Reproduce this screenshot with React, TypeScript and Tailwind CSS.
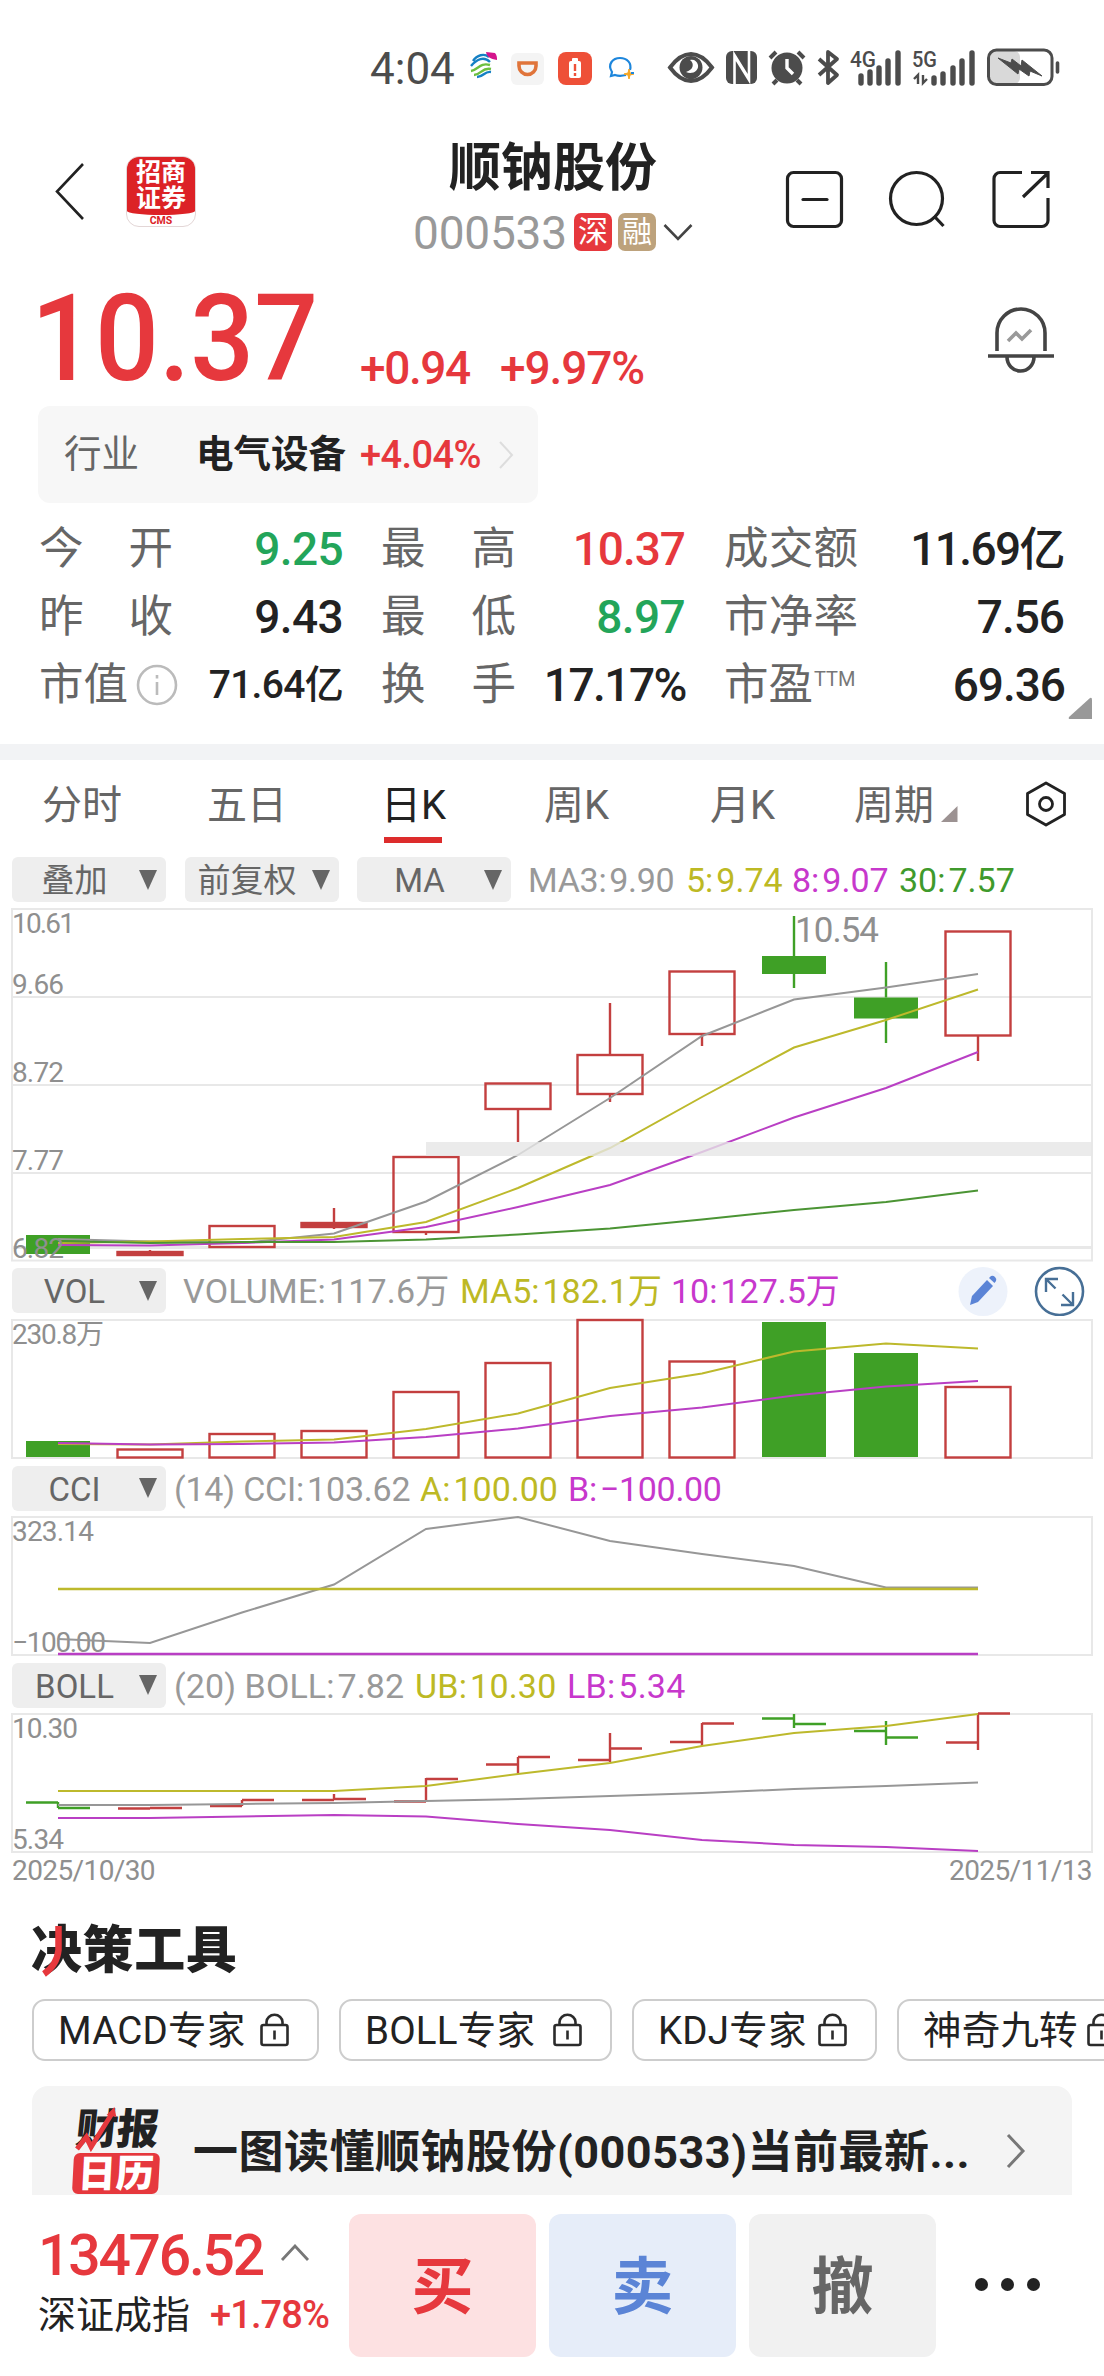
import type { ReactNode } from "react";

const CX = [58, 150, 242, 334, 426, 518, 610, 702, 794, 886, 978];
const RED = "#c33f3f";
const GREEN = "#3fa026";
const GRAY = "#979797";
const YELLOW = "#bdb92c";
const MAGENTA = "#b93fc4";
const FRAME = "#e8e8e8";

const line = (ys: number[]) => ys.map((y, i) => `${CX[i]},${y}`).join(" ");

function Line({ ys, color }: { ys: number[]; color: string }) {
  return <polyline points={line(ys)} fill="none" stroke={color} strokeWidth="2" />;
}

function AxisLabel({ x, y, w, children }: { x: number; y: number; w: number; children: string }) {
  return (
    <text x={x} y={y} textLength={w} className="fill-[#8f8f8f] text-[28px]">
      {children}
    </text>
  );
}

type Candle = { top: number; bottom: number; high: number; low: number; up: boolean; solid?: boolean };

const candles: Candle[] = [
  { top: 1235, bottom: 1254, high: 1235, low: 1254, up: false },
  { top: 1252, bottom: 1255, high: 1250, low: 1255, up: true, solid: true },
  { top: 1226, bottom: 1247, high: 1226, low: 1247, up: true },
  { top: 1223, bottom: 1227, high: 1208, low: 1229, up: true, solid: true },
  { top: 1157, bottom: 1232, high: 1157, low: 1235, up: true },
  { top: 1083.5, bottom: 1109, high: 1083, low: 1142, up: true },
  { top: 1055, bottom: 1094, high: 1003, low: 1102, up: true },
  { top: 971.5, bottom: 1034, high: 971, low: 1046, up: true },
  { top: 956, bottom: 974, high: 916, low: 988, up: false },
  { top: 997.5, bottom: 1018.5, high: 962, low: 1043, up: false },
  { top: 931.5, bottom: 1035.5, high: 931, low: 1061, up: true },
];

const volumes = [1441, 1449.5, 1434, 1431, 1392, 1363, 1320, 1361.5, 1322, 1353, 1387];

const ohlc = [
  { o: 1802.5, c: 1808, h: 1802, l: 1808, up: false },
  { o: 1808.5, c: 1808, h: 1808, l: 1808, up: true },
  { o: 1806, c: 1800, h: 1800, l: 1806, up: true },
  { o: 1800, c: 1799, h: 1794, l: 1800, up: true },
  { o: 1801.5, c: 1779, h: 1778, l: 1802, up: true },
  { o: 1764.5, c: 1757, h: 1757, l: 1773.5, up: true },
  { o: 1760, c: 1748.5, h: 1733, l: 1762, up: true },
  { o: 1742, c: 1723.5, h: 1723, l: 1746, up: true },
  { o: 1718.5, c: 1724, h: 1714, l: 1728, up: false },
  { o: 1731, c: 1737.5, h: 1721, l: 1745, up: false },
  { o: 1742.5, c: 1713.5, h: 1713, l: 1750, up: true },
];

function CandleChart() {
  return (
    <svg className="block h-[356px] w-full overflow-visible" viewBox="0 906 1104 356">
      <rect x="12" y="909" width="1080" height="351.5" fill="none" stroke={FRAME} strokeWidth="2" />
      {[997, 1085, 1173].map((y) => (
        <line key={y} x1="12" x2="1092" y1={y} y2={y} stroke={FRAME} strokeWidth="2" />
      ))}
      <line x1="12" x2="1092" y1="1247.5" y2="1247.5" stroke={FRAME} strokeWidth="3" />
      {candles.map((c, i) => {
        const color = c.up ? RED : GREEN;
        return (
          <g key={i} stroke={color} strokeWidth="2.4">
            <line x1={CX[i]} x2={CX[i]} y1={c.high} y2={c.top} />
            <line x1={CX[i]} x2={CX[i]} y1={c.bottom} y2={c.low} />
            {c.up ? (
              <rect x={CX[i] - 32.5} y={c.top} width="65" height={c.bottom - c.top} fill={c.solid ? RED : "none"} />
            ) : (
              <rect x={CX[i] - 32} y={c.top} width="64" height={c.bottom - c.top} fill={GREEN} stroke="none" />
            )}
          </g>
        );
      })}
      <Line ys={[1239, 1241.5, 1243, 1233.5, 1201.5, 1155, 1098, 1036, 999.5, 987.5, 974]} color={GRAY} />
      <Line ys={[1243, 1241.5, 1239, 1237, 1222, 1188, 1148, 1097, 1047.5, 1020, 989.5]} color={YELLOW} />
      <Line ys={[1245, 1245.5, 1243, 1239.5, 1227, 1207, 1185, 1152, 1117.5, 1088, 1052]} color={MAGENTA} />
      <Line ys={[1241, 1243, 1242, 1242, 1239.5, 1234.5, 1228.5, 1219.5, 1210, 1202, 1190.5]} color="#4b9434" />
      <rect x="426" y="1142" width="666" height="14" fill="#e6e6e6" fillOpacity="0.8" />
      <AxisLabel x={12} y={933} w={63}>10.61</AxisLabel>
      <AxisLabel x={12} y={994} w={52}>9.66</AxisLabel>
      <AxisLabel x={12} y={1082} w={52}>8.72</AxisLabel>
      <AxisLabel x={12} y={1170} w={52}>7.77</AxisLabel>
      <AxisLabel x={12} y={1258} w={52}>6.82</AxisLabel>
      <text x="795" y="942" textLength="84" className="fill-[#8f8f8f] text-[35px]">10.54</text>
    </svg>
  );
}

function VolumeChart() {
  return (
    <svg className="block h-[145px] w-full" viewBox="0 1317 1104 145">
      <rect x="12" y="1320" width="1080" height="138" fill="none" stroke={FRAME} strokeWidth="2" />
      <AxisLabel x={12} y={1344} w={92}>230.8万</AxisLabel>
      {volumes.map((y, i) =>
        [0, 8, 9].includes(i) ? (
          <rect key={i} x={CX[i] - 32} y={y} width="64" height={1457 - y} fill={GREEN} />
        ) : (
          <rect key={i} x={CX[i] - 32.5} y={y} width="65" height={1457.5 - y} fill="none" stroke={RED} strokeWidth="2.4" />
        ),
      )}
      <Line ys={[1444, 1444.5, 1441.5, 1439.5, 1429, 1413.5, 1388, 1373.5, 1351.5, 1343.5, 1348.5]} color={YELLOW} />
      <Line ys={[1443, 1444.5, 1444, 1442.5, 1437, 1428.5, 1416, 1407.5, 1395.5, 1386.5, 1381]} color={MAGENTA} />
    </svg>
  );
}

function CciChart() {
  return (
    <svg className="block h-[145px] w-full" viewBox="0 1514 1104 145">
      <rect x="12" y="1517" width="1080" height="138" fill="none" stroke={FRAME} strokeWidth="2" />
      <AxisLabel x={12} y={1541} w={82}>323.14</AxisLabel>
      <AxisLabel x={12} y={1652} w={94}>−100.00</AxisLabel>
      <Line ys={[1639, 1643, 1612.5, 1584.5, 1529, 1517, 1541, 1554, 1566, 1587.5, 1587.5]} color={GRAY} />
      <line x1="58" x2="978" y1="1589" y2="1589" stroke={YELLOW} strokeWidth="2.4" />
      <line x1="58" x2="978" y1="1654" y2="1654" stroke={MAGENTA} strokeWidth="2.4" />
    </svg>
  );
}

function BollChart() {
  return (
    <svg className="block h-[145px] w-full" viewBox="0 1711 1104 145">
      <rect x="12" y="1714" width="1080" height="138" fill="none" stroke={FRAME} strokeWidth="2" />
      <AxisLabel x={12} y={1738} w={66}>10.30</AxisLabel>
      <AxisLabel x={12} y={1849} w={52}>5.34</AxisLabel>
      {ohlc.map((b, i) => (
        <path
          key={i}
          d={`M${CX[i] - 32} ${b.o}H${CX[i]}M${CX[i]} ${b.h}V${b.l}M${CX[i]} ${b.c}h32`}
          stroke={b.up ? RED : GREEN}
          strokeWidth="2.4"
          fill="none"
        />
      ))}
      <Line ys={[1805, 1805, 1804, 1803, 1801, 1799, 1796, 1793, 1789, 1786, 1782.5]} color={GRAY} />
      <Line ys={[1791, 1791, 1791, 1791, 1786, 1774, 1763, 1746, 1733, 1726, 1714]} color={YELLOW} />
      <Line ys={[1818, 1818, 1816.5, 1815, 1816.5, 1824, 1830, 1840, 1845, 1847, 1851]} color={MAGENTA} />
    </svg>
  );
}

function Pill({ children }: { children: ReactNode }) {
  return (
    <div className="flex h-[45px] w-[154px] shrink-0 items-center rounded-md bg-[#eeeeee] pr-[9px] text-[#666]">
      <span className="flex-1 pt-[2px] pr-[2px] text-center text-[33px] leading-none whitespace-nowrap">{children}</span>
      <svg className="h-[20px] w-[18px] shrink-0" viewBox="0 0 18 20">
        <path d="M0 0H18L9 20Z" fill="#666" />
      </svg>
    </div>
  );
}

const tone = { gray: "text-[#999]", yellow: "text-[#bdb924]", magenta: "text-[#c738cc]", green: "text-[#3f9a2c]" };

function Figures({ items }: { items: [keyof typeof tone, string, string][] }) {
  return (
    <>
      {items.map(([t, width, text]) => {
        const [name, value] = text.split(":");
        return (
          <span key={text} className={`shrink-0 pt-px text-[34px] leading-none whitespace-nowrap ${width} ${tone[t]}`}>
            {name}:<span className="ml-[3px]">{value}</span>
          </span>
        );
      })}
    </>
  );
}

function Label({ text, className }: { text: string; className: string }) {
  return (
    <span className={`flex items-center justify-between text-[44.5px] text-[#666] ${className}`}>
      {text.split("").map((ch, i) => (
        <span key={i}>{ch}</span>
      ))}
    </span>
  );
}

function Lock() {
  return (
    <svg className="h-[34px] w-[29px] shrink-0" viewBox="0 0 29 34" fill="none" stroke="#2b2b2b" strokeWidth="2.6">
      <rect x="1.5" y="12" width="26" height="20" rx="2" />
      <path d="M6.5 12V9a8 7.2 0 0 1 16 0v3" />
      <path d="M14.5 17.500v9" />
    </svg>
  );
}

function Chip({ children, width }: { children: string; width: string }) {
  return (
    <div className={`flex h-[62px] shrink-0 items-center justify-between rounded-[13px] border-2 border-[#cdcdcd] pr-[28px] pl-[24px] ${width}`}>
      <span className="pt-[2px] text-[38.5px] leading-none tracking-[0.2px] whitespace-nowrap text-[#222]">{children}</span>
      <Lock />
    </div>
  );
}

function StatusBar() {
  return (
    <div className="flex h-[136px] items-start text-[#4c4c4c]">
      <span className="mt-[47px] ml-[370px] w-[99px] text-[44px] leading-none">4:04</span>
      <svg className="mt-[46px] h-[44px] w-[635px]" viewBox="469 46 635 44" fill="none">
        <g strokeWidth="2.4">
          <path d="M473 61c4-6 11-8 16-4M471 66c6-7 13-10 19-4" stroke="#1580c4" />
          <path d="M471 71c7-1 9-9 19-6M474 75c7 0 8-8 17-6" stroke="#6cbf3f" />
          <path d="M477 77c7 0 7-6 14-5" stroke="#1580c4" />
          <path d="M486 52l9 1c2 2 2 5 2 7-7-1-10-3-11-8z" fill="#d4148c" />
        </g>
        <rect x="511" y="53" width="33" height="32" rx="6" fill="#f4f4f4" />
        <path d="M519 63h17v3a8.500 8.500 0 0 1-17 0z" stroke="#e0743a" strokeWidth="3.600" />
        <rect x="558" y="52" width="34" height="33" rx="8" fill="#ee5038" />
        <rect x="569" y="61" width="12" height="17" rx="2" fill="#fff" />
        <rect x="572" y="58" width="6" height="4" rx="1" fill="#fff" />
        <path d="M575 64v7M575 73v3" stroke="#ee5038" strokeWidth="2.400" />
        <path d="M626 75c-4 1-8 1-11 0l-4 1 1-4c-5-8 1-14 8-14s12 5 10 12" stroke="#1d86dc" strokeWidth="2.200" />
        <path d="M629 69l1 4 4 1-4 1-1 4-1-4-4-1 4-1z" fill="#f5a623" stroke="#f5a623" />
        <path d="M631 73h3" stroke="#1d86dc" strokeWidth="2" />

        <path d="M670 67.500C677 58 684 54 691 54s14 4 21 13.500C705 77 698 81 691 81s-14-4-21-13.500z" stroke="#4c4c4c" strokeWidth="4" />
        <circle cx="691" cy="67.500" r="11.500" fill="#4c4c4c" />
        <path d="M690 60c5 4 3 10-4 12 6 3 13-1 12-7-1-4-4-6-8-5z" fill="#fff" />

        <rect x="726" y="51" width="31" height="33" rx="6" fill="#4c4c4c" />
        <path d="M734.500 84V55l13.500 22M749 51v29l-13.500-22" stroke="#fff" strokeWidth="2.600" />

        <circle cx="787" cy="68" r="15.500" fill="#4c4c4c" />
        <path d="M770 58l6-6M804 58l-6-6M777 80l-4 4M797 80l4 4" stroke="#4c4c4c" strokeWidth="4" />
        <path d="M787 59v9l6 6" stroke="#fff" strokeWidth="3.400" />

        <path d="M819 59l18 16-9 8V52l9 7-18 16" stroke="#4c4c4c" strokeWidth="3.800" strokeLinejoin="round" />

        <text x="850" y="67" textLength="26" lengthAdjust="spacingAndGlyphs" className="fill-[#4c4c4c] text-[22px] font-medium">4G</text>
        <path d="M861 76v7M870 72v11M879 68v15M888 61v22M898 53v30" stroke="#4c4c4c" strokeWidth="5.400" strokeLinecap="round" />
        <text x="912" y="67" textLength="25" lengthAdjust="spacingAndGlyphs" className="fill-[#4c4c4c] text-[22px] font-medium">5G</text>
        <path d="M934 78v5M943 74v9M953 68v15M962 61v22M972 53v30" stroke="#4c4c4c" strokeWidth="5.400" strokeLinecap="round" />
        <path d="M918 84v-9l-4 4M923 75v8l4-4" stroke="#4c4c4c" strokeWidth="2.400" />

        <rect x="990" y="51" width="30" height="33" rx="6" fill="#d9d9d9" />
        <rect x="988.500" y="50" width="63.500" height="34.500" rx="8" stroke="#4c4c4c" strokeWidth="3" />
        <path d="M1057.500 63v9" stroke="#4c4c4c" strokeWidth="3.600" strokeLinecap="round" />
        <path d="M998 58l13 5 1-4 9 7 1-6 20 16-12-5-1 5-10-7-1 5z" fill="#4c4c4c" stroke="#4c4c4c" />
      </svg>
    </div>
  );
}

function Header() {
  return (
    <header className="flex h-[130px] items-start">
      <svg className="mt-[26px] ml-[54px] h-[60px] w-[32px]" viewBox="0 0 32 60" fill="none" stroke="#222" strokeWidth="2.600">
        <path d="M29 2L3 29.500L29 57" />
      </svg>
      <div className="mt-[20px] ml-[40px] flex h-[71px] w-[70px] flex-col overflow-hidden rounded-[13px] border border-[#e3d6d6] bg-white text-center">
        <div className="flex h-[58px] shrink-0 flex-col justify-center rounded-b-[50%_4px] bg-[#dc2226] text-[25px] leading-[26px] font-bold text-white">
          <span>招商</span>
          <span>证券</span>
        </div>
        <span className="text-[10.500px] leading-[11px] font-bold text-[#dc2226]">CMS</span>
      </div>
      <div className="ml-[197px] flex w-[320px] flex-col items-center">
        <h1 className="mt-[3px] text-[52px] leading-[60px] font-bold text-[#222]">顺钠股份</h1>
        <div className="mt-[13px] flex h-[40px] items-center">
          <span className="w-[161px] pt-px text-[46px] leading-none tracking-[-0.200px] text-[#999]">000533</span>
          <span className="flex size-[38px] items-center justify-center rounded-[7px] bg-[#e6383d] text-[30px] leading-none text-white">深</span>
          <span className="ml-[6px] flex size-[38px] items-center justify-center rounded-[7px] bg-[#bda27c] text-[30px] leading-none text-white">融</span>
          <svg className="ml-[7px] h-[18px] w-[30px]" viewBox="0 0 30 18" fill="none" stroke="#444" strokeWidth="2.600">
            <path d="M1.500 2L15 16L28.500 2" />
          </svg>
        </div>
      </div>
      <svg className="mt-[34px] ml-[71px] h-[60px] w-[268px]" viewBox="784 170 268 60" fill="none" stroke="#222" strokeWidth="3.200">
        <rect x="787.500" y="172.500" width="54" height="54" rx="6" />
        <path d="M803 199.500h24" strokeLinecap="round" />
        <circle cx="916.500" cy="198.500" r="26" />
        <path d="M934 216l9.500 10" />
        <path d="M1022 172.500H1000a6 6 0 0 0-6 6V220.500a6 6 0 0 0 6 6h42a6 6 0 0 0 6-6V198" />
        <path d="M1023 197l25-24M1031 172.500h17V188" />
      </svg>
    </header>
  );
}

function Quote({ v, className }: { v: string; className: string }) {
  return <span className={`text-right leading-none font-medium whitespace-nowrap ${className}`}>{v}</span>;
}

export default function App() {
  return (
    <div className="flex h-[2376px] w-[1104px] flex-col overflow-hidden bg-white font-[Roboto,'Noto_Sans_CJK_SC',sans-serif] text-[#222]">
      <StatusBar />
      <Header />

      <section className="flex h-[140px] items-start pl-[31px] text-[#e6383d]">
        <span className="mt-[13px] w-[329px] origin-left scale-x-[0.93] text-[121px] leading-none font-medium">10.37</span>
        <span className="mt-[79px] w-[140px] text-[46px] leading-none font-medium tracking-[-1.400px]">+0.94</span>
        <span className="mt-[79px] text-[46px] leading-none font-medium tracking-[-1.100px]">+9.97%</span>
        <svg className="mt-[40px] mr-[48px] ml-auto h-[68px] w-[70px]" viewBox="986 306 70 68" fill="none" stroke="#444" strokeWidth="3.600">
          <path d="M997 351V333a24 24 0 0 1 48 0v18M988 356h66M1007 357a13.500 14 0 0 0 27 0" />
          <path d="M1008 341l8-8 6 6 9-9" stroke="#999" />
        </svg>
      </section>

      <section className="ml-[38px] flex h-[97px] w-[500px] items-center rounded-xl bg-[#f7f7f7] pl-[26px] leading-none">
        <span className="w-[132px] text-[37.500px] text-[#666]">行业</span>
        <span className="w-[164px] text-[37.500px] font-bold">电气设备</span>
        <span className="w-[138px] text-[38px] font-medium tracking-[-0.600px] text-[#e6383d]">+4.04%</span>
        <svg className="h-[28px] w-[16px]" viewBox="0 0 16 28" fill="none" stroke="#ddd" strokeWidth="2">
          <path d="M2 1L14 14L2 27" />
        </svg>
      </section>

      <section className="relative flex h-[241px] flex-col pt-[12px] leading-none">
        <div className="flex h-[68px] items-center pl-[39px]">
          <Label text="今开" className="w-[134px]" />
          <Quote v="9.25" className="w-[170px] text-[46px] tracking-[-0.600px] text-[#23a55a]" />
          <Label text="最高" className="ml-[38px] w-[135px]" />
          <Quote v="10.37" className="w-[169px] text-[46px] tracking-[-1px] text-[#e6383d]" />
          <Label text="成交额" className="ml-[39px] w-[134px]" />
          <Quote v="11.69亿" className="w-[206px] text-[46px] tracking-[-1.600px]" />
        </div>
        <div className="flex h-[68px] items-center pl-[39px]">
          <Label text="昨收" className="w-[134px]" />
          <Quote v="9.43" className="w-[170px] text-[46px] tracking-[-0.600px]" />
          <Label text="最低" className="ml-[38px] w-[135px]" />
          <Quote v="8.97" className="w-[169px] text-[46px] tracking-[-0.600px] text-[#23a55a]" />
          <Label text="市净率" className="ml-[39px] w-[134px]" />
          <Quote v="7.56" className="w-[206px] text-[46px] tracking-[-1px]" />
        </div>
        <div className="flex h-[68px] items-center pl-[39px]">
          <Label text="市值" className="w-[89px]" />
          <svg className="ml-[8px] size-[42px]" viewBox="0 0 42 42" fill="none" stroke="#bbb" strokeWidth="2.600">
            <circle cx="21" cy="21" r="19" />
            <path d="M21 18v13M21 11v3.500" />
          </svg>
          <Quote v="71.64亿" className="w-[165px] text-[39px] tracking-[-0.700px]" />
          <Label text="换手" className="ml-[38px] w-[135px]" />
          <Quote v="17.17%" className="-ml-[10px] w-[180px] text-[46px] tracking-[-1.500px]" />
          <Label text="市盈" className="ml-[38px] w-[89px]" />
          <span className="mb-[12px] ml-[1px] w-[45px] text-[20px] text-[#777]">TTM</span>
          <Quote v="69.36" className="w-[206px] text-[46px] tracking-[-1px]" />
        </div>
        <svg className="absolute top-[194px] left-[1068px] h-[22px] w-[24px]" viewBox="0 0 24 22">
          <path d="M22 1Q24 0 24 3V22H2Q0 22 1 20Z" fill="#999" />
        </svg>
      </section>

      <div className="h-[16px] shrink-0 bg-[#f2f3f5]" />

      <nav className="flex h-[97px] items-start pl-[42px] text-[40px] leading-none text-[#666]">
        <span className="mt-[26px] w-[165px]">分时</span>
        <span className="mt-[26px] w-[174px]">五日</span>
        <div className="mt-[26px] flex w-[163px] flex-col text-[#222]">
          日K
          <span className="mt-[11px] ml-[3px] h-[6px] w-[58px] bg-[#dd2c2c]" />
        </div>
        <span className="mt-[26px] w-[166px]">周K</span>
        <span className="mt-[26px] w-[144px]">月K</span>
        <span className="mt-[26px]">周期</span>
        <svg className="mt-[46px] ml-[7px] h-[16px] w-[17px]" viewBox="0 0 17 16">
          <path d="M16.500 0V16H0Z" fill="#9c9292" />
        </svg>
        <svg className="mt-[21px] ml-[67px] h-[46px] w-[42px]" viewBox="0 0 42 46" fill="none" stroke="#222" strokeWidth="2.800">
          <path d="M21 2L39.500 12.500V33.500L21 44L2.500 33.500V12.500Z" strokeLinejoin="round" />
          <circle cx="21" cy="23" r="6.500" />
        </svg>
      </nav>

      <div className="flex h-[49px] items-start pl-[12px]">
        <div className="flex h-[45px] items-center">
          <div className="flex w-[516px] gap-[18.500px]">
            <Pill>叠加</Pill>
            <Pill>前复权</Pill>
            <Pill>MA</Pill>
          </div>
          <Figures
            items={[
              ["gray", "w-[158px] tracking-[-0.300px]", "MA3:9.90"],
              ["yellow", "w-[106px]", "5:9.74"],
              ["magenta", "w-[107px]", "8:9.07"],
              ["green", "w-[122px]", "30:7.57"],
            ]}
          />
        </div>
      </div>
      <CandleChart />

      <div className="flex h-[55px] items-center pt-[2px] pl-[12px]">
        <Pill>VOL</Pill>
        <div className="ml-[17px] flex">
          <Figures
            items={[
              ["gray", "w-[277px] tracking-[0.200px]", "VOLUME:117.6万"],
              ["yellow", "w-[211px]", "MA5:182.1万"],
              ["magenta", "w-[170px]", "10:127.5万"],
            ]}
          />
        </div>
        <svg className="mr-[18px] ml-auto h-[50px] w-[128px] shrink-0" viewBox="959 1265 128 50" fill="none">
          <circle cx="984" cy="1290.500" r="24.500" fill="#edf2fb" />
          <path d="M971 1304l2-9 15-16 6 6-15 16z" fill="#5b84d6" />
          <path d="M990 1277l2-2q2-1 4 1t1 4l-1.500 2z" fill="#5b84d6" />
          <circle cx="1060.500" cy="1290.500" r="23.500" stroke="#476f96" strokeWidth="2.600" />
          <path d="M1047 1291v-13h12M1047.500 1278.500l9 9M1074 1291v13h-12M1073.500 1303.500l-10-10" stroke="#476f96" strokeWidth="2.400" />
        </svg>
      </div>
      <VolumeChart />

      <div className="flex h-[52px] items-center pl-[12px]">
        <Pill>CCI</Pill>
        <div className="ml-[8px] flex">
          <Figures
            items={[
              ["gray", "w-[246px] tracking-[-0.200px]", "(14) CCI:103.62"],
              ["yellow", "w-[148px]", "A:100.00"],
              ["magenta", "w-[170px] tracking-[-0.300px]", "B:−100.00"],
            ]}
          />
        </div>
      </div>
      <CciChart />

      <div className="flex h-[52px] items-center pl-[12px]">
        <Pill>BOLL</Pill>
        <div className="ml-[8px] flex">
          <Figures
            items={[
              ["gray", "w-[241px] tracking-[0.100px]", "(20) BOLL:7.82"],
              ["yellow", "w-[152px] tracking-[0.200px]", "UB:10.30"],
              ["magenta", "w-[170px] tracking-[0.200px]", "LB:5.34"],
            ]}
          />
        </div>
      </div>
      <BollChart />

      <div className="flex h-[56px] justify-between px-[12px] text-[28px] leading-[30px] tracking-[-0.600px] text-[#8f8f8f]">
        <span>2025/10/30</span>
        <span>2025/11/13</span>
      </div>

      <div className="flex h-[87px] items-start pl-[31px]">
        <h2 className="relative mt-[13px] text-[51px] leading-none font-black tracking-[0.600px]">
          决策工具
          <svg className="absolute top-0 left-0 h-[52px] w-[51px]" viewBox="0 0 51 52" fill="none">
            <path d="M27.500 1V25Q26 40 13 49" stroke="#e6383d" strokeWidth="6.500" />
          </svg>
        </h2>
      </div>

      <div className="flex h-[87px] items-start gap-[20px] overflow-hidden pl-[32px]">
        <Chip width="w-[287px]">MACD专家</Chip>
        <Chip width="w-[273px]">BOLL专家</Chip>
        <Chip width="w-[245px]">KDJ专家</Chip>
        <Chip width="w-[249px]">神奇九转</Chip>
      </div>

      <div className="ml-[32px] flex h-[109px] w-[1040px] items-start rounded-t-2xl bg-[#f4f4f4]">
        <div className="mt-[23px] ml-[39px] flex w-[89px] flex-col items-center">
          <div className="relative ml-[4px] -skew-x-6 text-[42px] leading-[42px] font-black tracking-[-1px]">
            财报
            <svg className="absolute top-[-3px] left-0 h-[46px] w-[44px]" viewBox="0 0 44 46" fill="none">
              <path d="M3 43L11 31L17 41L34 8" stroke="#e6383d" strokeWidth="5" />
              <path d="M29 9L36 1L39 11Z" fill="#e6383d" />
            </svg>
          </div>
          <div className="mt-[2px] flex h-[41px] w-[86px] -skew-x-3 items-center justify-center rounded-md bg-[#e6383d] text-[38px] leading-none font-black text-white">日历</div>
        </div>
        <span className="mt-[44px] ml-[33px] w-[813px] text-[45px] leading-none font-bold tracking-[0.500px] whitespace-nowrap">
          一图读懂顺钠股份(000533)当前最新...
        </span>
        <svg className="mt-[47px] h-[36px] w-[20px]" viewBox="0 0 20 36" fill="none" stroke="#777" strokeWidth="3">
          <path d="M2 2L17 18L2 34" />
        </svg>
      </div>

      <footer className="flex h-[181px] items-start pt-[19px]">
        <div className="ml-[38px] w-[311px] pt-[13px] leading-none">
          <div className="flex items-start">
            <span className="w-[242px] text-[57px] leading-[58px] font-medium tracking-[-2.200px] text-[#e6383d]">13476.52</span>
            <svg className="mt-[17px] h-[18px] w-[30px]" viewBox="0 0 30 18" fill="none" stroke="#777" strokeWidth="2.800">
              <path d="M2 16L15 2L28 16" />
            </svg>
          </div>
          <div className="mt-[11px] flex items-center">
            <span className="w-[172px] text-[38px]">深证成指</span>
            <span className="text-[38px] font-medium tracking-[-0.900px] text-[#e6383d]">+1.78%</span>
          </div>
        </div>
        <div className="flex gap-[13px] text-[62px] leading-none font-bold">
          <button className="flex h-[143px] w-[187px] items-center justify-center rounded-xl bg-[#fde1e2] pt-[5px] text-[#e6383d]">买</button>
          <button className="flex h-[143px] w-[187px] items-center justify-center rounded-xl bg-[#e6edf9] pt-[5px] text-[#5b84d6]">卖</button>
          <button className="flex h-[143px] w-[187px] items-center justify-center rounded-xl bg-[#f1f1f1] pt-[5px] text-[#666]">撤</button>
        </div>
        <div className="mt-[64px] ml-[39px] flex gap-[13px]">
          <span className="size-[13px] rounded-full bg-[#222]" />
          <span className="size-[13px] rounded-full bg-[#222]" />
          <span className="size-[13px] rounded-full bg-[#222]" />
        </div>
      </footer>
    </div>
  );
}
